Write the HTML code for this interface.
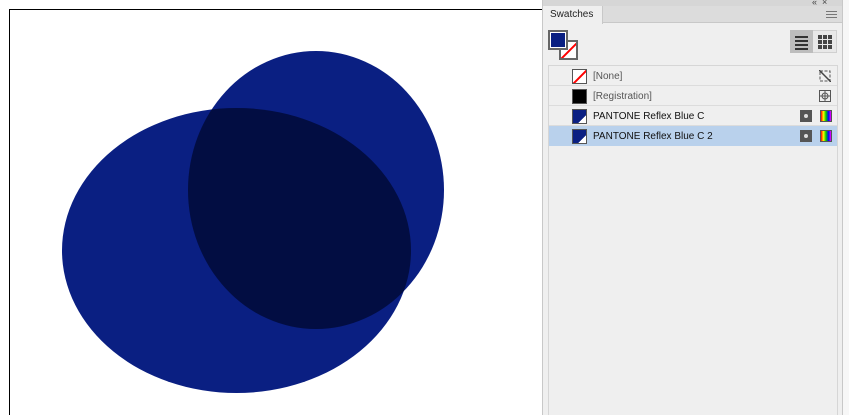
<!DOCTYPE html>
<html><head><style>
*{margin:0;padding:0;box-sizing:border-box}
html,body{width:849px;height:415px;overflow:hidden}
body{background:#fff;font-family:"Liberation Sans",sans-serif;position:relative}
.a{position:absolute}
.row{position:absolute;left:549px;width:288px;height:20px;border-bottom:1px solid #dcdcdc;font-size:10px;color:#111}
.row .t{position:absolute;left:44px;top:5px}
.sw{position:absolute;left:23px;top:3px;width:15px;height:15px;border:1px solid #555}
</style></head><body>
<div class="a" style="left:9px;top:9px;width:540px;height:406px;border-left:1px solid #000;border-top:1px solid #000"></div>
<svg class="a" style="left:0;top:0" width="540" height="415">
<ellipse cx="236.5" cy="250.5" rx="174.5" ry="142.5" fill="#0a1f82"/>
<ellipse cx="316" cy="190" rx="128" ry="139" fill="#0a1f82"/>
<clipPath id="c"><ellipse cx="236.5" cy="250.5" rx="174.5" ry="142.5"/></clipPath>
<ellipse cx="316" cy="190" rx="128" ry="139" fill="#020d42" clip-path="url(#c)"/>
</svg>
<div class="a" style="left:542px;top:0;width:301px;height:415px;background:#efefef;border-left:1px solid #c8c8c8;border-right:1px solid #c8c8c8"></div>
<div class="a" style="left:843px;top:0;width:6px;height:415px;background:#f7f7f7"></div>
<div class="a" style="left:543px;top:0;width:299px;height:6px;background:#d6d6d6"></div>
<div class="a" style="left:812px;top:-3px;font-size:9px;color:#444">«&nbsp;&nbsp;×</div>
<div class="a" style="left:543px;top:6px;width:299px;height:17px;background:#dcdcdc;border-bottom:1px solid #c8c8c8"></div>
<div class="a" style="left:543px;top:6px;width:60px;height:18px;background:#efefef;border-right:1px solid #c8c8c8;font-size:10px;color:#222;padding:3px 0 0 7px">Swatches</div>
<div class="a" style="left:826px;top:11px;width:11px;height:1px;background:#777;box-shadow:0 3px 0 #777,0 6px 0 #777"></div>
<div class="a" style="left:559px;top:40px;width:19px;height:20px;background:#fff;border:2px solid #666;overflow:hidden"><div style="position:absolute;left:-4px;top:7px;width:26px;height:2px;background:#f00;transform:rotate(-45deg)"></div></div>
<div class="a" style="left:548px;top:30px;width:20px;height:20px;background:#0a1f82;border:2px solid #666;box-shadow:inset 0 0 0 1px #fff"></div>
<div class="a" style="left:790px;top:30px;width:47px;height:23px;background:#e8e8e8;border:1px solid #d0d0d0"></div>
<div class="a" style="left:790px;top:30px;width:23px;height:23px;background:#bdbdbd"></div>
<div class="a" style="left:795px;top:36px;width:13px;height:2px;background:#333;box-shadow:0 4px 0 #333,0 8px 0 #333,0 12px 0 #333"></div>
<svg class="a" style="left:818px;top:35px" width="14" height="14"><g fill="#444"><rect x="0" y="0" width="4" height="4"/><rect x="5" y="0" width="4" height="4"/><rect x="10" y="0" width="4" height="4"/><rect x="0" y="5" width="4" height="4"/><rect x="5" y="5" width="4" height="4"/><rect x="10" y="5" width="4" height="4"/><rect x="0" y="10" width="4" height="4"/><rect x="5" y="10" width="4" height="4"/><rect x="10" y="10" width="4" height="4"/></g></svg>
<div class="a" style="left:548px;top:65px;width:290px;height:350px;border:1px solid #d6d6d6;border-bottom:none;background:#efefef"></div>
<div class="row" style="top:66px"><div class="sw" style="background:#fff;overflow:hidden"><div style="position:absolute;left:-3px;top:6px;width:20px;height:2px;background:#f00;transform:rotate(-45deg)"></div></div><span class="t" style="color:#555">[None]</span>
<svg class="a" style="left:270px;top:4px" width="12" height="12"><rect x="1" y="1" width="10" height="10" fill="none" stroke="#555" stroke-dasharray="3 1.5"/><path d="M0 0L12 12" stroke="#444" stroke-width="1.5"/></svg></div>
<div class="row" style="top:86px"><div class="sw" style="background:#000"></div><span class="t" style="color:#555">[Registration]</span>
<svg class="a" style="left:270px;top:4px" width="12" height="12"><rect x=".5" y=".5" width="11" height="11" fill="none" stroke="#555"/><circle cx="6" cy="6" r="3" fill="none" stroke="#555"/><path d="M6 1V11M1 6H11" stroke="#555"/></svg></div>
<div class="row" style="top:106px"><div class="sw" style="background:linear-gradient(135deg,#0a1f82 70%,#fff 70%)"></div><span class="t">PANTONE Reflex Blue C</span>
<div class="a" style="left:251px;top:4px;width:12px;height:12px;background:#555"><div style="position:absolute;left:4px;top:4px;width:4px;height:4px;border-radius:50%;background:#ddd"></div></div>
<div class="a" style="left:271px;top:4px;width:12px;height:12px;border:1px solid #555;background:linear-gradient(90deg,#f00,#ff0,#0c0,#00f,#f0f)"></div></div>
<div class="row" style="top:126px;background:#b9d1ec;border-bottom:none"><div class="sw" style="background:linear-gradient(135deg,#0a1f82 70%,#fff 70%)"></div><span class="t">PANTONE Reflex Blue C 2</span>
<div class="a" style="left:251px;top:4px;width:12px;height:12px;background:#555"><div style="position:absolute;left:4px;top:4px;width:4px;height:4px;border-radius:50%;background:#ddd"></div></div>
<div class="a" style="left:271px;top:4px;width:12px;height:12px;border:1px solid #555;background:linear-gradient(90deg,#f00,#ff0,#0c0,#00f,#f0f)"></div></div>
</body></html>
